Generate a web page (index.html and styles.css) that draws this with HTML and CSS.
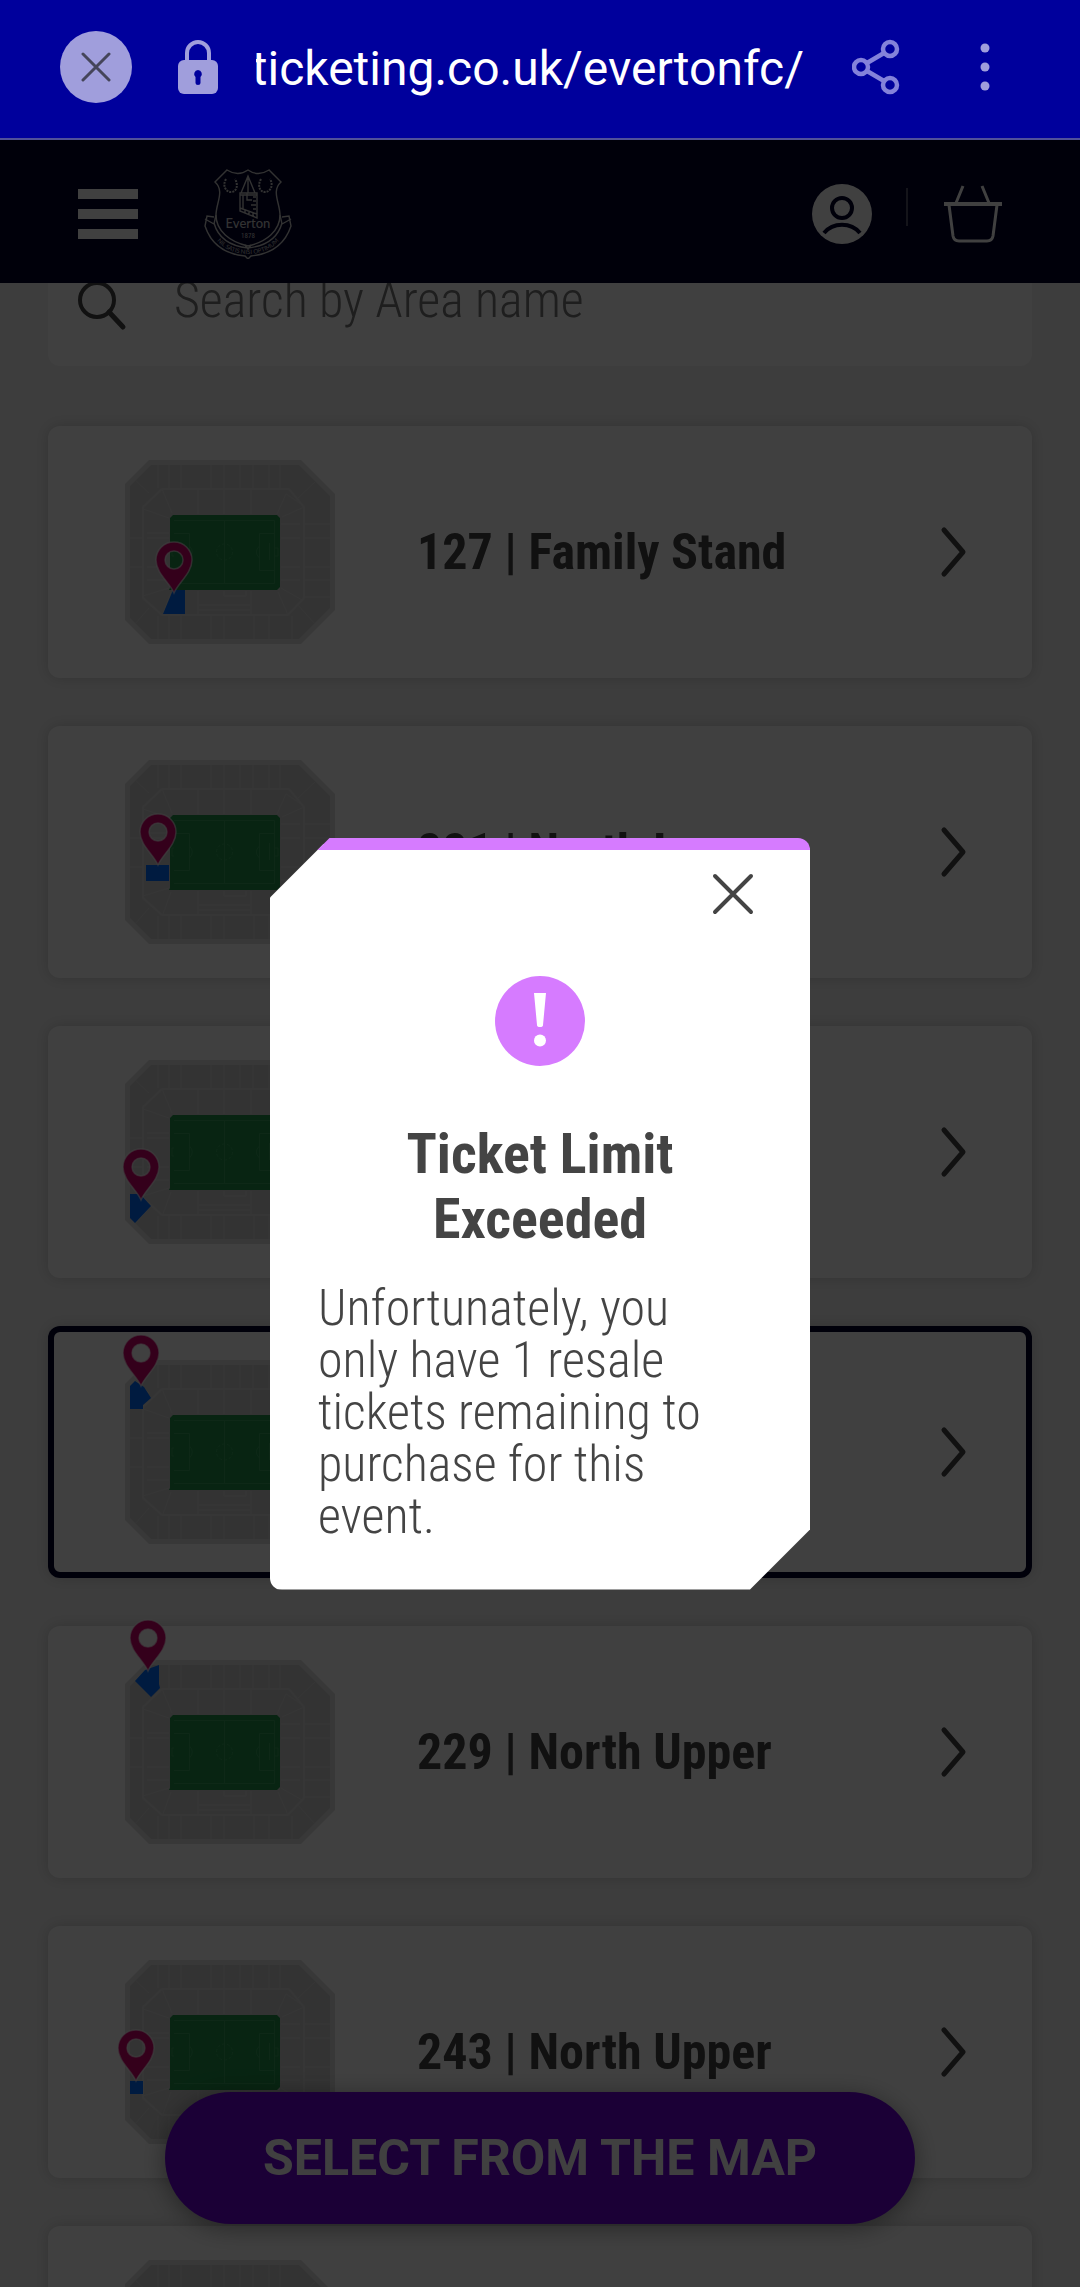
FILE: index.html
```html
<!DOCTYPE html>
<html lang="en">
<head>
<meta charset="utf-8">
<meta name="viewport" content="width=device-width, initial-scale=1">
<title>Everton FC ticketing</title>
<link rel="stylesheet" href="styles.css">
</head>
<body>

<svg class="sprite" aria-hidden="true">
  <symbol id="stadium" viewBox="0 0 210 184">
    <path d="M24 0H176L210 34V150L176 184H24L0 160V24Z" fill="#e0e0e0"/>
    <path d="M26 5H174L205 36V148L174 179H26L5 158V26Z" fill="#cccccc"/>
    <g fill="none" stroke="#d6d6d6" stroke-width="1">
      <path d="M37 29H164L179 47V138L163 155H37L18 138V47Z" stroke-width="2"/>
      <path d="M33 5V28M44 5V28M56 5V28M86 5V28M99 5V54M115 5V28M128 5V28M144 5V28M155 5V28"/>
      <path d="M33 156V179M44 156V179M56 156V179M86 156V179M99 156V179M129 156V179M144 156V179M167 156V179"/>
      <path d="M73 29V54M126 29V54M73 131V155M126 131V155M73 145H126M73 150H126M99 131V136H121V131"/>
      <path d="M179 64H205M179 78H205M179 107H205M179 120H205M179 137H205M156 64H175M156 78H175M156 107H175M156 120H175"/>
      <path d="M5 78H18M5 107H18M22 73H44M22 78H44M22 107H44M22 120H44"/>
      <path d="M10 20L24 33M190 22L172 39M10 164L24 148M190 164L172 144M37 29L47 53M18 49L44 58M161 34L152 54M179 47L157 57M176 44L161 34M38 154L46 132M18 136L44 128M163 155L153 132M177 140L156 128"/>
    </g>
    <path d="M48 55H152L155 58V127L152 130H44L45 128V58Z" fill="#209048"/>
    <g fill="none" stroke="#38a05c" stroke-width="1">
      <path d="M49 60.500H149.500V123.500H49M99.500 60V124M49 73.500H64.500V110.500H49M150 73.500H134.500V110.500H150M144.500 83V100"/>
      <circle cx="99.500" cy="92" r="8" stroke-dasharray="3 2"/>
      <path d="M64.500 86Q70 92 64.500 98M134.500 86Q128 92 134.500 98M49 88H47V96H49M150 88H153V96H150"/>
    </g>
  </symbol>
  <symbol id="pin" viewBox="0 0 40 54">
    <path fill-rule="evenodd" d="M20 52C16 42 2 32 2 19A18 18 0 0 1 38 19C38 32 24 42 20 52ZM20 10A9 9 0 1 0 20 28A9 9 0 1 0 20 10Z" fill="#d0006c" stroke="#ffffff" stroke-opacity=".6" stroke-width="1.500"/>
  </symbol>
  <symbol id="chevron" viewBox="0 0 30 54">
    <path d="M5 5L24 27L5 49" fill="none" stroke="#444444" stroke-width="5" stroke-linecap="round" stroke-linejoin="round"/>
  </symbol>
</svg>

<div class="browser-bar">
  <button class="bar-close" aria-label="Close tab">
    <svg width="30" height="30" viewBox="0 0 30 30"><path d="M2 2L28 28M28 2L2 28" stroke="#45455a" stroke-width="3" stroke-linecap="round"/></svg>
  </button>
  <svg class="bar-lock" width="40" height="56" viewBox="0 0 40 56" aria-hidden="true">
    <path d="M9 24V14A11 11 0 0 1 31 14V24" fill="none" stroke="#a09edc" stroke-width="4"/>
    <rect x="0" y="21" width="40" height="34" rx="6" fill="#a09edc"/>
    <path d="M20 31A4 4 0 0 0 17.500 38V44Q17.500 46 20 46T22.500 44V38A4 4 0 0 0 20 31Z" fill="#00009c"/>
  </svg>
  <div class="bar-url"><span>ticketing.co.uk/evertonfc/</span></div>
  <button class="bar-icon bar-share" aria-label="Share">
    <svg width="48" height="56" viewBox="0 0 48 56" fill="none" stroke="#8482da" stroke-width="4.500">
      <circle cx="9" cy="28" r="7"/><circle cx="38" cy="10" r="7"/><circle cx="38" cy="46" r="7"/>
      <path d="M15 24L32 14M15 32L32 42"/>
    </svg>
  </button>
  <button class="bar-icon" aria-label="More options">
    <svg width="10" height="48" viewBox="0 0 10 48" fill="#a09edc"><circle cx="5" cy="5" r="4.500"/><circle cx="5" cy="24" r="4.500"/><circle cx="5" cy="43" r="4.500"/></svg>
  </button>
</div>

<div class="page">
  <header class="site-header">
    <button class="menu" aria-label="Menu"><span></span><span></span><span></span></button>
    <a class="crest" href="#" aria-label="Everton home">
      <svg width="88" height="90" viewBox="0 0 88 90" fill="none" stroke="#c8c8c8" stroke-width="1.400">
        <path d="M23 1Q34 8 44 1Q54 8 65 1L77 13C67 22 76 34 76 46C76 62 62 73 44 77C26 73 12 62 12 46C12 34 21 22 11 13Z"/>
        <path d="M22 10C18 17 22 23 27 23C32 23 35 17 31 10M57 10C53 17 56 23 61 23C66 23 70 17 66 10" stroke-width="2" stroke-dasharray="2 1"/>
        <path d="M44 7L37 24H51ZM44 8V24M36 24H53V49L36 42ZM36 26H53M39 26V40M49 28H52M49 32H52M47 36H52M49 40H52M36 39L53 45M41 41V44M45 42V46M49 43V48M43 24V31H48"/>
        <path d="M10 54Q16 76 44 79Q72 76 78 54M10 48L3 47L1 57Q10 84 41 87L44 90L47 87Q78 84 87 57L85 47L78 48M12 46L10 55L1 50M76 46L78 55L87 50M41 76L44 80L47 76"/>
        <path id="motto-line" d="M6 61Q18 85 44 85Q70 85 82 61" stroke="none"/>
        <text class="crest-name" x="44" y="59">Everton</text>
        <text class="crest-year" x="44" y="69">1878</text>
        <text class="crest-motto"><textPath href="#motto-line" startOffset="50%">NIL SATIS NISI OPTIMUM</textPath></text>
      </svg>
    </a>
    <nav class="account" aria-label="Account">
      <a href="#" aria-label="My account">
        <svg width="60" height="60" viewBox="0 0 60 60"><circle cx="30" cy="30" r="30" fill="#ffffff"/><g fill="none" stroke="#000028" stroke-width="4"><circle cx="30" cy="24" r="10"/><path d="M12 49C21 38 39 38 48 49"/></g></svg>
      </a>
      <i class="divider"></i>
      <a href="#" aria-label="Basket">
        <svg width="60" height="60" viewBox="0 0 60 60" fill="none" stroke="#ffffff" stroke-width="3"><path d="M1 20H59" stroke-width="4"/><path d="M20 2L13 19M39 2L46 19M6 21L10 52Q11 57 16 57H44Q49 57 50 52L54 21"/></svg>
      </a>
    </nav>
  </header>

  <main class="areas">
    <label class="search">
      <svg width="50" height="50" viewBox="0 0 50 50" fill="none" stroke="#444444" stroke-width="4" stroke-linecap="round"><circle cx="19" cy="19" r="17"/><path d="M31 31L45 46" stroke-width="5"/></svg>
      <input type="search" placeholder="Search by Area name" aria-label="Search by Area name">
    </label>

    <a class="card" href="#">
      <svg class="map" viewBox="0 0 210 184"><use href="#stadium"/><path d="M48 130H60V154H38Z" fill="#006cff"/><use href="#pin" x="29" y="81" width="40" height="54"/></svg>
      <span class="name">127 | Family Stand</span>
      <svg class="chevron"><use href="#chevron"/></svg>
    </a>
    <a class="card" href="#">
      <svg class="map" viewBox="0 0 210 184"><use href="#stadium"/><path d="M21 105H44V121H21Z" fill="#006cff"/><use href="#pin" x="13" y="53" width="40" height="54"/></svg>
      <span class="name">221 | North Lower</span>
      <svg class="chevron"><use href="#chevron"/></svg>
    </a>
    <a class="card" href="#">
      <svg class="map" viewBox="0 0 210 184"><use href="#stadium"/><path d="M5 134H15L26 146L10 163L5 158Z" fill="#006cff"/><use href="#pin" x="-4" y="88" width="40" height="54"/></svg>
      <span class="name">244 | North Upper</span>
      <svg class="chevron"><use href="#chevron"/></svg>
    </a>
    <a class="card selected" href="#">
      <svg class="map" viewBox="0 0 210 184"><use href="#stadium"/><path d="M5 26L10 21L19 27L26 38L18 45V49H5Z" fill="#006cff"/><use href="#pin" x="-4" y="-26" width="40" height="54"/></svg>
      <span class="name">228 | North Upper</span>
      <svg class="chevron"><use href="#chevron"/></svg>
    </a>
    <a class="card" href="#">
      <svg class="map" viewBox="0 0 210 184"><use href="#stadium"/><path d="M10 21L20 10L34 5V24L35 28L26 37Z" fill="#006cff"/><use href="#pin" x="3" y="-41" width="40" height="54"/></svg>
      <span class="name">229 | North Upper</span>
      <svg class="chevron"><use href="#chevron"/></svg>
    </a>
    <a class="card" href="#">
      <svg class="map" viewBox="0 0 210 184"><use href="#stadium"/><path d="M5 121H18V134H5Z" fill="#006cff"/><use href="#pin" x="-9" y="69" width="40" height="54"/></svg>
      <span class="name">243 | North Upper</span>
      <svg class="chevron"><use href="#chevron"/></svg>
    </a>
    <a class="card" href="#">
      <svg class="map" viewBox="0 0 210 184"><use href="#stadium"/></svg>
    </a>
  </main>

  <button class="map-button">SELECT FROM THE MAP</button>

  <div class="overlay">
    <section class="modal" role="alertdialog" aria-labelledby="modal-title" aria-describedby="modal-text">
      <button class="modal-close" aria-label="Close">
        <svg width="44" height="44" viewBox="0 0 44 44"><path d="M4 4L40 40M40 4L4 40" stroke="#444444" stroke-width="4" stroke-linecap="round"/></svg>
      </button>
      <svg class="alert" width="90" height="90" viewBox="0 0 90 90" aria-hidden="true"><circle cx="45" cy="45" r="45" fill="#d67bff"/><path d="M39 17H51L48 49Q48 51 45 51T42 49Z" fill="#ffffff"/><circle cx="45" cy="64.500" r="6" fill="#ffffff"/></svg>
      <h1 id="modal-title">Ticket Limit Exceeded</h1>
      <p id="modal-text">Unfortunately, you only have 1 resale tickets remaining to purchase for this event.</p>
    </section>
  </div>
</div>

</body>
</html>
```
FILE: styles.css
```css
* { box-sizing: border-box; }

body {
  margin: 0;
  height: 100vh;
  display: flex;
  flex-direction: column;
  overflow: hidden;
  font-family: "Roboto Condensed", Roboto, sans-serif;
  color: #444444;
}

button {
  border: 0;
  padding: 0;
  background: none;
  font: inherit;
  color: inherit;
}

a { color: inherit; text-decoration: none; }
svg { display: block; flex: none; }

.sprite { position: absolute; width: 0; height: 0; }

/* Browser bar */
.browser-bar {
  flex: none;
  display: flex;
  align-items: center;
  height: 140px;
  padding: 0 90px 4px 60px;
  border-bottom: 2px solid #50509a;
  background: #00009c;
}

.bar-close {
  flex: none;
  display: grid;
  place-items: center;
  width: 72px;
  height: 72px;
  border-radius: 50%;
  background: #a09edc;
}

.bar-lock { margin-left: 46px; }

/* Long addresses keep their end in view */
.bar-url {
  flex: 1;
  display: flex;
  justify-content: flex-end;
  margin-left: 38px;
  padding-top: 4px;
  overflow: hidden;
  white-space: nowrap;
  font: 400 48px/72px Roboto, sans-serif;
  color: #ffffff;
}

.bar-icon { flex: none; }
.bar-share { margin: 0 80px 0 48px; }

/* Page */
.page {
  position: relative;
  flex: 1;
  min-height: 0;
  display: flex;
  flex-direction: column;
  background: #f2f2f2;
}

.site-header {
  flex: none;
  display: flex;
  align-items: center;
  height: 143px;
  padding: 4px 77px 0 78px;
  background: #000028;
}

.menu {
  display: flex;
  flex-direction: column;
  gap: 10px;
  width: 60px;
}

.menu span { height: 10px; background: #ffffff; }

.crest { margin-left: 66px; }

.crest text { fill: #c8c8c8; stroke: none; text-anchor: middle; }
.crest-name { font: 500 13px Lato, sans-serif; }
.crest-year { font: 400 7px "Roboto Condensed", sans-serif; }
.crest-motto { font: 400 6px Lato, sans-serif; }

.account {
  display: flex;
  align-items: center;
  margin-left: auto;
}

.divider {
  width: 2px;
  height: 38px;
  margin: 0 35px 14px 34px;
  background: #505068;
}

.areas {
  flex: 1;
  min-height: 0;
  display: flex;
  flex-direction: column;
  gap: 48px;
  padding: 0 48px;
  overflow: hidden;
}

.search {
  flex: none;
  display: flex;
  align-items: center;
  gap: 46px;
  height: 132px;
  margin: -49px 0 12px;
  padding: 0 30px;
  border-radius: 12px;
  background: #ffffff;
}

.search svg { margin-top: 12px; }

.search input {
  flex: 1;
  min-width: 0;
  height: 72px;
  padding: 0;
  border: 0;
  outline: 0;
  background: none;
  font: 300 50px/72px "Roboto Condensed", Roboto, sans-serif;
  color: #444444;
}

.search input::placeholder { color: #777777; opacity: 1; }

.card {
  flex: none;
  display: flex;
  align-items: center;
  height: 252px;
  padding: 0 63px 0 77px;
  border-radius: 12px;
  background: #ffffff;
  box-shadow: 0 0 14px rgba(0, 0, 0, .16);
}

.card.selected { box-shadow: inset 0 0 0 6px #000028, 0 0 14px rgba(0, 0, 0, .16); }

.map {
  width: 210px;
  height: 184px;
  overflow: visible;
}

.name {
  flex: 1;
  margin-left: 82px;
  font-size: 50px;
  line-height: 60px;
  font-weight: 700;
}

.chevron { width: 30px; height: 54px; }

.map-button {
  position: absolute;
  left: 165px;
  right: 165px;
  bottom: 63px;
  height: 132px;
  border-radius: 66px;
  background: #6c00d8;
  box-shadow: 0 4px 24px rgba(0, 0, 0, .4);
  font: 700 50px/60px Roboto, sans-serif;
  color: #ffffff;
}

/* Dialog */
.overlay {
  position: absolute;
  inset: 0;
  display: flex;
  align-items: center;
  justify-content: center;
  background: rgba(0, 0, 0, .75);
}

.modal {
  display: flex;
  flex-direction: column;
  width: 50%;
  padding: 22px 48px 48px;
  border-top: 12px solid #d67bff;
  border-radius: 0 12px 0 12px;
  background: #ffffff;
  clip-path: polygon(60px 0, 100% 0, 100% calc(100% - 60px), calc(100% - 60px) 100%, 0 100%, 0 60px);
}

.modal-close { align-self: flex-end; margin-right: 7px; }

.alert { align-self: center; margin: 60px 0 56px; }

.modal h1 {
  margin: 0;
  font-size: 56px;
  line-height: 65px;
  font-weight: 700;
  text-align: center;
}

.modal p {
  margin: 30px 0 0;
  padding-right: 36px;
  font-size: 50px;
  line-height: 52px;
  font-weight: 300;
}
```
